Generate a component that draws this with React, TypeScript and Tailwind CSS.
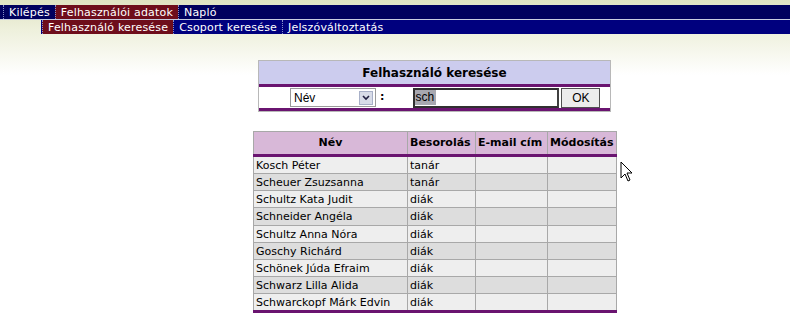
import React from "react"

const font = "font-['Verdana','DejaVu_Sans',sans-serif]"

const topItems = [
  { label: "Kilépés", active: false },
  { label: "Felhasználói adatok", active: true },
  { label: "Napló", active: false },
]

const subItems = [
  { label: "Felhasználó keresése", active: true },
  { label: "Csoport keresése", active: false },
  { label: "Jelszóváltoztatás", active: false },
]

const rows = [
  ["Kosch Péter", "tanár"],
  ["Scheuer Zsuzsanna", "tanár"],
  ["Schultz Kata Judit", "diák"],
  ["Schneider Angéla", "diák"],
  ["Schultz Anna Nóra", "diák"],
  ["Goschy Richárd", "diák"],
  ["Schönek Júda Efraim", "diák"],
  ["Schwarz Lilla Alida", "diák"],
  ["Schwarckopf Márk Edvin", "diák"],
]

function NavItem({ label, active }: { label: string; active: boolean }) {
  return (
    <span
      className={`h-full flex items-center px-[5px] tracking-[0.18px] border-l border-dotted border-[#8890c8] ${
        active ? "bg-[#6e0d1b]" : ""
      }`}
    >
      {label}
    </span>
  )
}

export default function App() {
  return (
    <div
      className={`relative w-[790px] h-[329px] overflow-hidden bg-[linear-gradient(to_bottom,#dfe3c2_0px,#eef0dc_30px,#ffffff_75px)] text-[11px] text-black ${font}`}
    >
      {/* menus */}
      <div className="pt-[5px]">
        <div className="h-[14px] bg-[#00005e] text-white flex items-center pl-[3px] leading-none">
          {topItems.map((it) => (
            <NavItem key={it.label} {...it} />
          ))}
        </div>
        <div className="h-px bg-[#c8cce0]" />
        <div className="ml-[41px] pl-[1px] h-[14px] bg-[#00007e] text-white flex items-center leading-none">
          {subItems.map((it) => (
            <NavItem key={it.label} {...it} />
          ))}
        </div>
      </div>

      {/* search box */}
      <div className="ml-[258px] mt-[26px] w-[353px] border border-[#b8b8b8] bg-white">
        <div className="h-[23px] bg-[#ccccee] flex items-center justify-center font-bold text-[12px]">
          Felhasználó keresése
        </div>
        <div className="h-[3px] bg-[#6a1470]" />
        <div className="h-[21px] flex items-center">
          <div className="ml-[31px] w-[86px] h-[19px] border border-[#9a9a9a] bg-white flex items-center justify-between pl-[3px] pr-[2px] font-['Liberation_Sans',sans-serif] text-[12px]">
            <span>Név</span>
            <span className="w-[14px] h-[14px] bg-[#d8dce8] border border-[#a8b0c8] flex items-center justify-center">
              <svg width="8" height="6" viewBox="0 0 8 6">
                <path d="M1 1 L4 4 L7 1" stroke="#202040" strokeWidth="1.6" fill="none" />
              </svg>
            </span>
          </div>
          <span className="ml-[4px] font-bold">:</span>
          <div className="ml-[29px] w-[146px] h-[20px] border-2 border-[#303030] border-r-[#404040] bg-white flex items-center font-['Liberation_Sans',sans-serif] text-[12px]">
            <span className="bg-[#a8a8b0] leading-[15px] pr-[2px]">sch</span>
          </div>
          <div className="ml-[2px] w-[39px] h-[20px] border border-[#505050] bg-[#ececec] flex items-center justify-center font-['Liberation_Sans',sans-serif] text-[12px]">
            OK
          </div>
        </div>
        <div className="h-[3px] bg-[#6a1470]" />
      </div>

      {/* results */}
      <table className="ml-[253px] mt-[19px] w-[364px] border-collapse border border-[#a8a8a8] bg-white">
        <thead>
          <tr className="h-[24px] bg-[#d8b8d8] font-bold border-b-[3px] border-b-[#6a1470]">
            <th className="w-[154px] text-center border-r border-[#a8a8a8] font-bold pt-[1px]">Név</th>
            <th className="w-[68px] text-left border-r border-[#a8a8a8] font-bold px-[2px] pt-[1px]">Besorolás</th>
            <th className="w-[72px] text-left border-r border-[#a8a8a8] font-bold px-[2px] pt-[1px]">E-mail cím</th>
            <th className="text-left font-bold px-[2px] pt-[1px]">Módosítás</th>
          </tr>
        </thead>
        <tbody>
          {rows.map(([name, role], i) => (
            <tr
              key={name}
              className={`h-[17.2px] border-b border-[#a8a8a8] ${i % 2 === 0 ? "bg-[#eeeeee]" : "bg-[#dddddd]"} ${
                i === rows.length - 1 ? "border-b-[3px] border-b-[#6a1470]" : ""
              }`}
            >
              <td className="border-r border-[#a8a8a8] px-[2px] pt-[1px] whitespace-nowrap leading-[15px]">{name}</td>
              <td className="border-r border-[#a8a8a8] px-[2px] pt-[1px] leading-[15px]">{role}</td>
              <td className="border-r border-[#a8a8a8]"></td>
              <td></td>
            </tr>
          ))}
        </tbody>
      </table>

      {/* mouse pointer */}
      <svg className="absolute left-[620px] top-[161px]" width="14" height="22" viewBox="0 0 14 22">
        <path d="M1 1 L1 17 L5 13 L8 20 L10 19 L7 12 L12 12 Z" fill="white" stroke="black" strokeWidth="1" />
      </svg>
    </div>
  )
}
